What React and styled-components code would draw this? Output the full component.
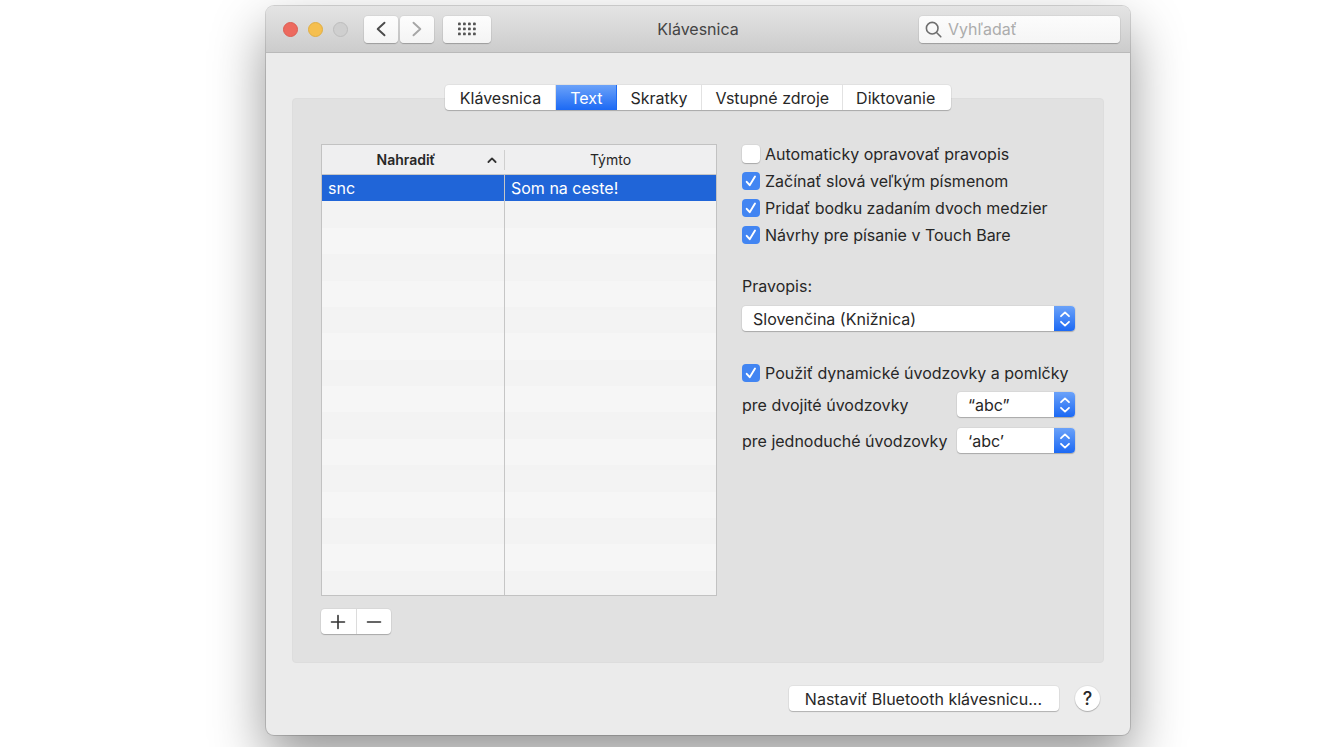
import React, { useState } from "react";
import styled, { createGlobalStyle, css } from "styled-components";

const GlobalStyle = createGlobalStyle`
  * { box-sizing: border-box; }
  body {
    margin: 0;
    background: #fff;
    color: #272727;
    font-family: Inter, "Liberation Sans", sans-serif;
    font-size: 16px;
    line-height: 20px;
  }
  button, input, select { font: inherit; color: inherit; margin: 0; }
`;

const raised = css`
  border: 0;
  background: #fff;
  box-shadow: 0 0 0 1px rgba(0, 0, 0, 0.04), 0 1px 1px rgba(0, 0, 0, 0.22);
`;

const Page = styled.div`
  min-height: 100vh;
  padding: 6px 0 12px 68px;
  overflow: hidden;
`;

const Window = styled.main`
  width: 100%;
  max-width: 864px;
  margin: 0 auto;
  border-radius: 8px;
  background: #ebebeb;
  box-shadow: 0 0 0 1px rgba(0, 0, 0, 0.15), 0 24px 54px rgba(0, 0, 0, 0.42);
`;

const TitleBar = styled.header`
  display: grid;
  grid-template-columns: 1fr auto 1fr;
  align-items: center;
  height: 47px;
  padding: 0 10px;
  border-bottom: 1px solid #b9b9b9;
  border-radius: 8px 8px 0 0;
  background: linear-gradient(#e4e4e4, #cccccc);
`;

const Title = styled.h1`
  margin: 0;
  font-size: 16px;
  font-weight: 400;
  color: #444;
`;

const Controls = styled.div`
  display: flex;
  align-items: center;
  padding-left: 7px;
`;

const Lights = styled.div`
  display: flex;
  gap: 10px;
  margin-right: 16px;
`;

const Light = styled.button`
  width: 15px;
  height: 15px;
  padding: 0;
  border: 1px solid ${(p) => p.$edge};
  border-radius: 50%;
  background: ${(p) => p.$fill};
`;

const ToolButton = styled.button`
  ${raised}
  display: grid;
  place-items: center;
  width: ${(p) => (p.$wide ? 48 : 34)}px;
  height: 27px;
  margin-left: ${(p) => p.$gap || 0}px;
  padding: 0;
  border-radius: 4px;
  background: linear-gradient(#fdfdfd, #f4f4f4);
`;

const Search = styled.label`
  ${raised}
  justify-self: end;
  display: flex;
  align-items: center;
  gap: 6px;
  width: 201px;
  max-width: 100%;
  height: 27px;
  padding: 0 6px;
  border-radius: 4px;
  background: linear-gradient(#fcfcfc, #f5f5f5);
`;

const SearchInput = styled.input`
  flex: 1;
  min-width: 0;
  padding: 0;
  border: 0;
  outline: 0;
  background: none;
  &::placeholder { color: #acacac; opacity: 1; }
`;

const Body = styled.div`
  padding: 32px 26px 24px;
`;

const Tabs = styled.div`
  ${raised}
  position: relative;
  display: flex;
  width: fit-content;
  height: 25px;
  margin: 0 auto -12px;
  border-radius: 4px;
`;

const Tab = styled.button`
  padding: 0 13px 0 14px;
  border: 0;
  border-right: 1px solid #e2e2e2;
  background: none;
  white-space: nowrap;
  &:first-child { padding: 0 14px 0 15px; border-radius: 4px 0 0 4px; }
  &:last-child { padding: 0 16px 0 13px; border-right: 0; border-radius: 0 4px 4px 0; }
  ${(p) => p.$active && css`
    border-color: #1d6af3;
    background: linear-gradient(#6ba2f9, #1c69f4);
    color: #fff;
  `}
`;

const Panel = styled.section`
  display: flex;
  gap: 25px;
  padding: 45px 28px 28px;
  border: 1px solid #dddddd;
  border-radius: 4px;
  background: #e1e1e1;
`;

const TableSide = styled.div`
  flex: 396 1 0;
  min-width: 0;
`;

const Table = styled.table`
  width: 100%;
  height: 452px;
  border: 1px solid #c2c2c2;
  border-collapse: separate;
  border-spacing: 0;
  table-layout: fixed;
  background: #f6f6f6;
`;

const HeadCell = styled.th`
  width: ${(p) => p.$width || "auto"};
  height: 30px;
  padding: 0;
  border-bottom: 1px solid #c6c6c6;
  background: #efeff0;
  font-size: 14px;
  font-weight: ${(p) => (p.$sorted ? 600 : 400)};
`;

const HeadInner = styled.div`
  display: grid;
  grid-template-columns: ${(p) => (p.$sorted ? "10px 1fr 24px" : "24px 1fr 24px")};
  align-items: center;
  justify-items: center;
  height: 20px;
  border-right: ${(p) => (p.$sorted ? "1px solid #cfcfcf" : "0")};
`;

const HeadText = styled.span`
  grid-column: 2;
`;

const Row = styled.tr`
  height: ${(p) => (p.$last ? 24 : 26)}px;
  background: ${(p) => (p.$selected ? "#2065d8" : "#f6f6f6")};
  color: ${(p) => (p.$selected ? "#fff" : "inherit")};
  &:nth-child(even) { background: #f3f3f3; }
`;

const Cell = styled.td`
  padding: 0 6px;
  line-height: 20px;
  &:first-child { border-right: 1px solid #c6c6c6; }
`;

const Stepper = styled.div`
  ${raised}
  display: flex;
  width: 70px;
  height: 25px;
  margin-top: 13px;
  border-radius: 4px;
`;

const StepButton = styled.button`
  flex: 1;
  display: grid;
  place-items: center;
  padding: 0;
  border: 0;
  background: none;
  & + & { border-left: 1px solid #dcdcdc; }
`;

const Form = styled.form`
  flex: 333 1 0;
  min-width: 0;
`;

const Checks = styled.div`
  display: flex;
  flex-direction: column;
  gap: 7px;
  margin-bottom: 31px;
`;

const CheckLabel = styled.label`
  display: flex;
  align-items: center;
  gap: 5px;
  height: 20px;
  white-space: nowrap;
`;

const CheckBox = styled.span`
  display: grid;
  width: 18px;
  height: 18px;
  & > * { grid-area: 1 / 1; place-self: center; }
  & > svg { pointer-events: none; }
`;

const CheckInput = styled.input`
  ${raised}
  appearance: none;
  width: 18px;
  height: 18px;
  border-radius: 4px;
  &:checked {
    background: #4285f2;
    box-shadow: none;
  }
  &:not(:checked) + svg { display: none; }
`;

const FieldLabel = styled.label`
  display: block;
  white-space: nowrap;
`;

const SelectBox = styled.span`
  ${raised}
  display: flex;
  width: ${(p) => p.$width};
  height: 25px;
  margin: ${(p) => p.$margin || 0};
  border-radius: 4px;
  position: relative;
`;

const SelectInput = styled.select`
  appearance: none;
  width: 100%;
  padding: 0 30px 0 11px;
  border: 0;
  border-radius: 4px;
  background: none;
`;

const Arrows = styled.span`
  position: absolute;
  inset: 0 0 0 auto;
  display: grid;
  place-items: center;
  width: 21px;
  border-radius: 0 4px 4px 0;
  background: linear-gradient(#6ba2f9, #1c69f4);
  pointer-events: none;
`;

const Quotes = styled.div`
  display: grid;
  gap: 11px;
  margin-top: 9px;
`;

const QuoteRow = styled.div`
  display: flex;
  align-items: center;
  justify-content: space-between;
`;

const Footer = styled.footer`
  display: flex;
  justify-content: flex-end;
  gap: 16px;
  padding: 23px 4px 0;
`;

const PushButton = styled.button`
  ${raised}
  height: 25px;
  padding: 0 17px 0 16px;
  border-radius: 4px;
`;

const HelpButton = styled.button`
  ${raised}
  width: 25px;
  height: 25px;
  padding: 0;
  border-radius: 50%;
  font-size: 18px;
  font-weight: 500;
`;

const Stroke = ({ w, h, d, color = "#333", width = 2 }) => (
  <svg width={w} height={h} viewBox={`0 0 ${w} ${h}`} fill="none" stroke={color}
    strokeWidth={width} strokeLinecap="round" strokeLinejoin="round" aria-hidden="true">
    <path d={d} />
  </svg>
);

const GridIcon = () => (
  <svg width="20" height="14" viewBox="0 0 20 14" fill="#555" aria-hidden="true">
    {[0, 1, 2].map((r) => [0, 1, 2, 3].map((c) => (
      <rect key={`${r}${c}`} x={1 + c * 5} y={0.5 + r * 5} width="2.8" height="2.8" rx="0.9" />
    )))}
  </svg>
);

function Check({ children, checked = false }) {
  return (
    <CheckLabel>
      <CheckBox>
        <CheckInput type="checkbox" defaultChecked={checked} />
        <Stroke w={18} h={18} d="M4.7 9.8 7.7 13.2 13 4.6" color="#fff" width={1.9} />
      </CheckBox>
      {children}
    </CheckLabel>
  );
}

function Select({ id, value, width, margin }) {
  return (
    <SelectBox $width={width} $margin={margin}>
      <SelectInput id={id} defaultValue={value}>
        <option>{value}</option>
      </SelectInput>
      <Arrows>
        <Stroke w={12} h={18} d="M2 6.2 6 2.4 10 6.2M2 11.8 6 15.6 10 11.8" color="#fff" width={1.8} />
      </Arrows>
    </SelectBox>
  );
}

const tabs = ["Klávesnica", "Text", "Skratky", "Vstupné zdroje", "Diktovanie"];
const emptyRows = Array.from({ length: 15 }, (_, i) => i);

export default function App() {
  const [tab, setTab] = useState("Text");
  return (
    <Page>
      <GlobalStyle />
      <Window>
        <TitleBar>
          <Controls>
            <Lights>
              <Light aria-label="Zavrieť" $fill="#ed6a5f" $edge="#dc5d53" />
              <Light aria-label="Minimalizovať" $fill="#f5bf4f" $edge="#e0ae44" />
              <Light aria-label="Zväčšiť" $fill="#cfcfcf" $edge="#bdbdbd" />
            </Lights>
            <ToolButton aria-label="Späť">
              <Stroke w={10} h={16} d="M8.5 1.7 1.7 8 8.5 14.3" color="#4a4a4a" width={1.9} />
            </ToolButton>
            <ToolButton aria-label="Dopredu" $gap={2}>
              <Stroke w={10} h={16} d="M1.5 1.7 8.3 8 1.5 14.3" color="#a6a6a6" width={1.9} />
            </ToolButton>
            <ToolButton aria-label="Zobraziť všetko" $wide $gap={9}>
              <GridIcon />
            </ToolButton>
          </Controls>
          <Title>Klávesnica</Title>
          <Search>
            <Stroke w={17} h={17} d="M13 7.2A5.8 5.8 0 1 1 1.4 7.2 5.8 5.8 0 0 1 13 7.2M11.5 11.5 15.8 15.8" color="#6e6e6e" width={1.6} />
            <SearchInput type="search" placeholder="Vyhľadať" aria-label="Vyhľadať" />
          </Search>
        </TitleBar>
        <Body>
          <Tabs role="tablist">
            {tabs.map((t) => (
              <Tab key={t} role="tab" aria-selected={t === tab} $active={t === tab} onClick={() => setTab(t)}>
                {t}
              </Tab>
            ))}
          </Tabs>
          <Panel>
            <TableSide>
              <Table>
                <thead>
                  <tr>
                    <HeadCell $sorted $width="183px" aria-sort="ascending">
                      <HeadInner $sorted>
                        <HeadText>Nahradiť</HeadText>
                        <Stroke w={10} h={8} d="M1.4 6 5 2.4 8.6 6" width={1.8} />
                      </HeadInner>
                    </HeadCell>
                    <HeadCell>
                      <HeadInner><HeadText>Týmto</HeadText></HeadInner>
                    </HeadCell>
                  </tr>
                </thead>
                <tbody>
                  <Row $selected>
                    <Cell>snc</Cell>
                    <Cell>Som na ceste!</Cell>
                  </Row>
                  {emptyRows.map((i) => (
                    <Row key={i} $last={i === 14}><Cell /><Cell /></Row>
                  ))}
                </tbody>
              </Table>
              <Stepper>
                <StepButton aria-label="Pridať">
                  <Stroke w={16} h={16} d="M8 1.5V14.5M1.5 8H14.5" width={1.6} />
                </StepButton>
                <StepButton aria-label="Odstrániť">
                  <Stroke w={16} h={16} d="M1.5 8H14.5" width={1.6} />
                </StepButton>
              </Stepper>
            </TableSide>
            <Form>
              <Checks>
                <Check>Automaticky opravovať pravopis</Check>
                <Check checked>Začínať slová veľkým písmenom</Check>
                <Check checked>Pridať bodku zadaním dvoch medzier</Check>
                <Check checked>Návrhy pre písanie v Touch Bare</Check>
              </Checks>
              <FieldLabel htmlFor="spelling">Pravopis:</FieldLabel>
              <Select id="spelling" value="Slovenčina (Knižnica)" width="100%" margin="10px 0 32px" />
              <Check checked>Použiť dynamické úvodzovky a pomlčky</Check>
              <Quotes>
                <QuoteRow>
                  <FieldLabel htmlFor="double">pre dvojité úvodzovky</FieldLabel>
                  <Select id="double" value="“abc”" width="118px" />
                </QuoteRow>
                <QuoteRow>
                  <FieldLabel htmlFor="single">pre jednoduché úvodzovky</FieldLabel>
                  <Select id="single" value="‘abc’" width="118px" />
                </QuoteRow>
              </Quotes>
            </Form>
          </Panel>
          <Footer>
            <PushButton>Nastaviť Bluetooth klávesnicu...</PushButton>
            <HelpButton aria-label="Pomocník">?</HelpButton>
          </Footer>
        </Body>
      </Window>
    </Page>
  );
}
